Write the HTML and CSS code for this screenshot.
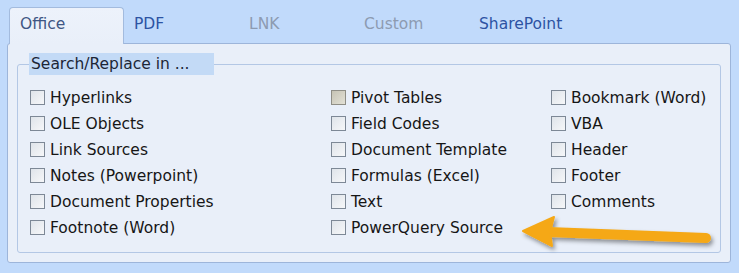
FILE: index.html
```html
<!DOCTYPE html>
<html lang="en">
<head>
  <meta charset="UTF-8" />
  <title>Search/Replace options</title>
  <link rel="stylesheet" href="styles.css">
</head>
<body>
  <div class="window">
    <div class="tabs">
      <div class="tab active">Office</div>
      <div class="tab">PDF</div>
      <div class="tab disabled">LNK</div>
      <div class="tab disabled">Custom</div>
      <div class="tab">SharePoint</div>
    </div>

    <div class="panel">
      <fieldset class="group">
        <legend>Search/Replace in ...</legend>
        <div class="options">
          <label class="opt"><span class="box"></span>Hyperlinks</label>
          <label class="opt"><span class="box mixed"></span>Pivot Tables</label>
          <label class="opt"><span class="box"></span>Bookmark (Word)</label>

          <label class="opt"><span class="box"></span>OLE Objects</label>
          <label class="opt"><span class="box"></span>Field Codes</label>
          <label class="opt"><span class="box"></span>VBA</label>

          <label class="opt"><span class="box"></span>Link Sources</label>
          <label class="opt"><span class="box"></span>Document Template</label>
          <label class="opt"><span class="box"></span>Header</label>

          <label class="opt"><span class="box"></span>Notes (Powerpoint)</label>
          <label class="opt"><span class="box"></span>Formulas (Excel)</label>
          <label class="opt"><span class="box"></span>Footer</label>

          <label class="opt"><span class="box"></span>Document Properties</label>
          <label class="opt"><span class="box"></span>Text</label>
          <label class="opt"><span class="box"></span>Comments</label>

          <label class="opt"><span class="box"></span>Footnote (Word)</label>
          <label class="opt"><span class="box"></span>PowerQuery Source</label>
        </div>
      </fieldset>

      <!-- arrow pointing at the new option -->
      <svg class="arrow" width="739" height="273" viewBox="0 0 739 273">
        <defs>
          <filter id="shadow" x="-10%" y="-50%" width="120%" height="200%">
            <feDropShadow dx="2" dy="3" stdDeviation="2" flood-color="#000" flood-opacity="0.4" />
          </filter>
        </defs>
        <g filter="url(#shadow)" fill="#f5a815" stroke="#f5a815">
          <line x1="548" y1="232" x2="706" y2="238" stroke-width="10" stroke-linecap="round" />
          <path d="M523 231 L554 217 Q549 232 552 246 Z" stroke-width="2" stroke-linejoin="round" />
        </g>
      </svg>
    </div>
  </div>
</body>
</html>
```

FILE: styles.css
```css
body {
  margin: 0;
  background: #c1dafb;
  font-family: "DejaVu Sans", Verdana, sans-serif;
  font-size: 15.5px;
  color: #161616;
}
.window {
  padding: 7px 8px 10px 7px;
}

/* tab strip */
.tabs {
  display: flex;
  padding-left: 2px;
  height: 36px;
}
.tab {
  width: 115px;
  box-sizing: border-box;
  padding: 8px 0 0 10px;
  color: #2d53a3;
}
.tab.disabled {
  color: #8d9bb1;
}
.tab.active {
  color: #3f5684;
  background: linear-gradient(#edf2fb, #e9eff9);
  border: 1px solid #a3bbde;
  border-bottom: none;
  border-radius: 4px 4px 0 0;
  height: 37px;
  padding-top: 7px;
  position: relative;
  z-index: 1;
}

/* panel */
.panel {
  position: relative;
  background: #e9eff9;
  border: 1px solid #9db5da;
  border-radius: 3px;
  padding: 9px;
}
.group {
  margin: 0;
  border: 1px solid #b3c7e5;
  border-radius: 3px;
  padding: 0 0 12px 11px;
}
.group legend {
  background: #c3daf6;
  padding: 0 24px 0 2px;
  line-height: 22px;
  color: #1c2636;
}
.options {
  display: grid;
  grid-template-columns: 301px 220px auto;
  grid-auto-rows: 26px;
  margin-top: 9px;
  padding-left: 1px;
}
.opt {
  display: flex;
  align-items: center;
  padding-top: 1px;
}
.box {
  width: 13px;
  height: 13px;
  border: 1px solid #7d8896;
  background: linear-gradient(135deg, #dfe4ea, #f6f7f9);
  margin-right: 5px;
  flex: none;
}
.box.mixed {
  background: linear-gradient(135deg, #c6c3b4, #e3e1d6);
  border-color: #8f8e86;
}

.arrow {
  position: absolute;
  left: -8px;
  top: -44px;
  pointer-events: none;
}
```
